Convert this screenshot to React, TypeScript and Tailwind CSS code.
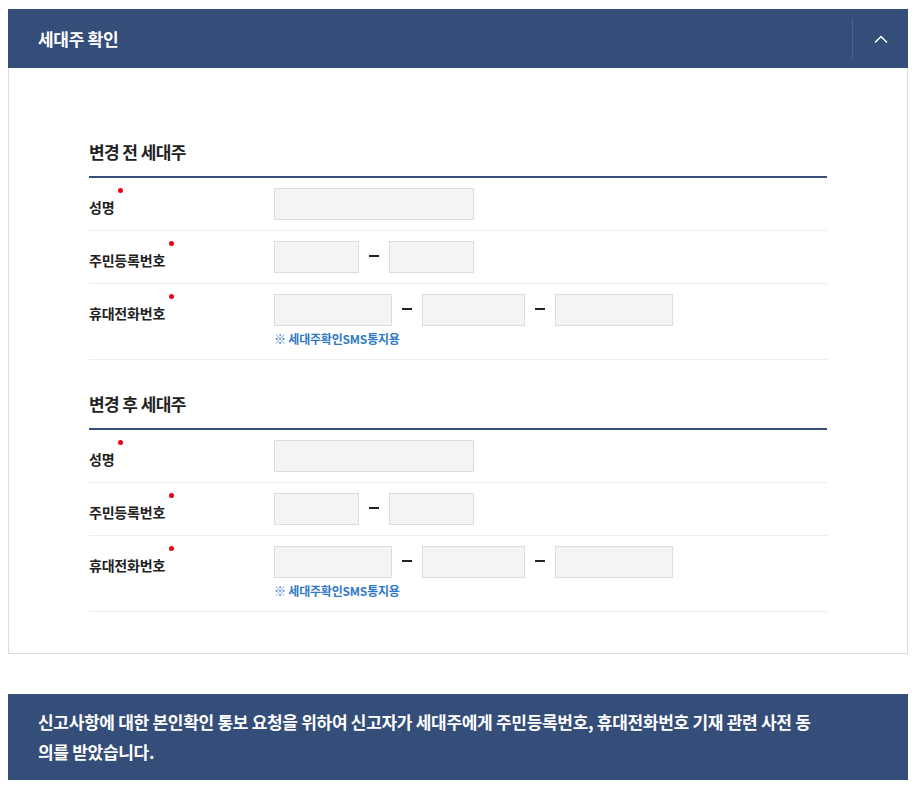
import React from 'react';

const FONT = { fontFamily: '"Noto Sans CJK KR", "Noto Sans", sans-serif' };

const Input: React.FC<{ w: string }> = ({ w }) => (
  <input type="text" className={`${w} h-[32px] border border-[#dcdcdc] bg-[#f4f4f4] outline-none`} />
);

const Dash: React.FC = () => (
  <span className="flex w-[30px] justify-center pb-[3px]">
    <span className="h-[2px] w-[10px] bg-[#222]" />
  </span>
);

const Label: React.FC<{ text: string }> = ({ text }) => (
  <div className="w-[185px] shrink-0 pt-[6px]">
    <span className="relative text-[14px] font-bold tracking-[-0.2px] text-[#222]">
      {text}
      <span className="absolute -right-[9px] -top-[9px] h-[5px] w-[5px] rounded-full bg-[#e60012]" />
    </span>
  </div>
);

const Section: React.FC<{ title: string }> = ({ title }) => (
  <section>
    <h3 className="pb-[12px] text-[17px] font-bold leading-[24px] tracking-[-0.6px] text-[#222]">{title}</h3>
    <div className="border-t-2 border-[#344d79]">
      <div className="flex border-b border-[#ececec] pb-[10px] pt-[10px]">
        <Label text="성명" />
        <Input w="w-[200px]" />
      </div>
      <div className="flex border-b border-[#ececec] pb-[10px] pt-[10px]">
        <Label text="주민등록번호" />
        <div className="flex items-center">
          <Input w="w-[85px]" />
          <Dash />
          <Input w="w-[85px]" />
        </div>
      </div>
      <div className="flex border-b border-[#ececec] pb-[11px] pt-[10px]">
        <Label text="휴대전화번호" />
        <div>
          <div className="flex items-center">
            <Input w="w-[118px]" />
            <Dash />
            <Input w="w-[103px]" />
            <Dash />
            <Input w="w-[118px]" />
          </div>
          <p className="mt-[4px] text-[12px] font-bold leading-[18px] tracking-[-0.2px] text-[#2f7ac6]">※ 세대주확인SMS통지용</p>
        </div>
      </div>
    </div>
  </section>
);

export default function App() {
  return (
    <div className="min-h-screen bg-white px-[8px] pt-[9px]" style={FONT}>
      <div className="flex h-[59px] items-center bg-[#344d79]">
        <h2 className="flex-1 pl-[30px] text-[17px] font-bold tracking-[-0.3px] text-white">세대주 확인</h2>
        <div className="h-[40px] w-px bg-[#4a6290]" />
        <button className="flex h-full w-[55px] items-center justify-center">
          <svg width="14" height="8" viewBox="0 0 14 8" fill="none" stroke="white" strokeWidth="1.5">
            <path d="M1 7.5 L7 1.5 L13 7.5" />
          </svg>
        </button>
      </div>
      <div className="border border-t-0 border-[#dcdcdc] pb-[41px] pl-[80px] pr-[80px] pt-[72px]">
        <div className="flex flex-col gap-[32px]">
          <Section title="변경 전 세대주" />
          <Section title="변경 후 세대주" />
        </div>
      </div>
      <div className="mt-[40px] bg-[#344d79] py-[13px] pl-[30px] pr-[86px]">
        <p className="break-all text-[17px] font-bold leading-[30px] tracking-[-0.3px] text-white">
          신고사항에 대한 본인확인 통보 요청을 위하여 신고자가 세대주에게 주민등록번호, 휴대전화번호 기재 관련 사전 동의를 받았습니다.
        </p>
      </div>
    </div>
  );
}
